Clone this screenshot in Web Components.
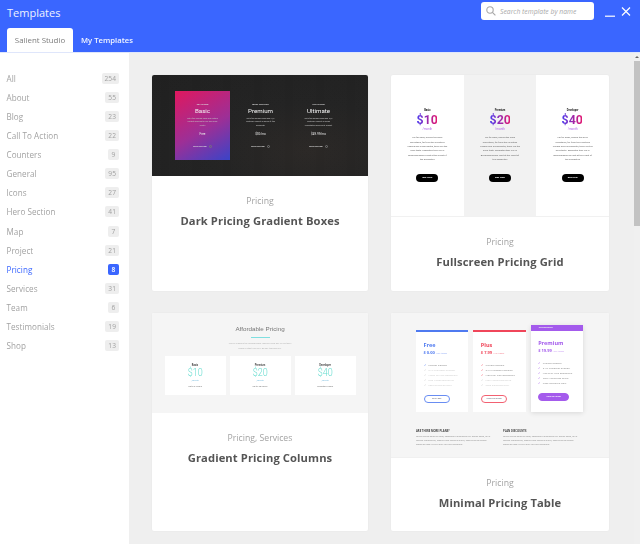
<!DOCTYPE html>
<html lang="en"><head><meta charset="utf-8"><title>Templates</title>
<style>
html,body{margin:0;height:544px;overflow:hidden;font-family:"Open Sans","Noto Sans",sans-serif;background:#efefef}
</style></head><body>
<x-app></x-app>
<script>
function def(name,css,html){
  customElements.define(name,class extends HTMLElement{
    constructor(){super();const r=this.attachShadow({mode:'open'});
      const h=typeof html==='function'?html(this):html;
      r.innerHTML='<style>'+css+'</style>'+h;}
  });
}
const A=(e,n,d='')=>e.getAttribute(n)??d;

def('x-cat',`:host{display:flex;align-items:center;justify-content:space-between;height:19.14px;font:8.1px "Open Sans",sans-serif;color:#a2a2a2;letter-spacing:.05px}
b{font-weight:400;font-size:6.6px;background:#eeeeee;color:#a0a0a0;border-radius:2px;height:11px;min-width:11px;padding:0 3px;box-sizing:border-box;display:flex;align-items:center;justify-content:center}
:host([active]){color:#3a66ff}:host([active]) b{background:#3a66ff;color:#fff;font-weight:600}`,
e=>`<slot></slot><b>${A(e,'n')}</b>`);

def('x-sidebar',`:host{display:block;width:129px;flex:none;background:#fff;box-sizing:border-box;padding:15.5px 10px 0 6.5px}`,
`<x-cat n="254">All</x-cat><x-cat n="55">About</x-cat><x-cat n="23">Blog</x-cat><x-cat n="22">Call To Action</x-cat><x-cat n="9">Counters</x-cat><x-cat n="95">General</x-cat><x-cat n="27">Icons</x-cat><x-cat n="41">Hero Section</x-cat><x-cat n="7">Map</x-cat><x-cat n="21">Project</x-cat><x-cat n="8" active>Pricing</x-cat><x-cat n="31">Services</x-cat><x-cat n="6">Team</x-cat><x-cat n="19">Testimonials</x-cat><x-cat n="13">Shop</x-cat>`);

def('x-search',`:host{display:flex;align-items:center;gap:4px;width:113px;height:18px;box-sizing:border-box;padding:0 5px;background:#fff;border-radius:3px;font:italic 6.8px "Open Sans",sans-serif;color:#a9a9a9;white-space:nowrap}
svg{flex:none}`,
`<svg width="10" height="10" viewBox="0 0 10 10" fill="none" stroke="#a8a8a8" stroke-width="1.1"><circle cx="4" cy="4" r="3.2"/><path d="M6.4 6.4 9.4 9.4"/></svg><span>Search template by name</span>`);

def('x-header',`:host{display:block;height:53px;background:#3a66ff;color:#fff;box-sizing:border-box;padding:2px 0 0 7px;border-bottom:1px solid #dfe6fb;flex:none;font-family:"Open Sans",sans-serif}
.top{display:flex;align-items:flex-start;height:26px}
h1{margin:0;font-weight:400;font-size:11px;line-height:22px;flex:1;color:#eef2ff}
x-search{margin-right:11px}
.ctl{display:flex;gap:6px;align-items:center;height:19px;margin-right:9px}
.tabs{display:flex;height:24px;gap:8px}
.tab{font-size:7.7px;display:flex;align-items:center;justify-content:center;border-radius:3px 3px 0 0;font-weight:600;color:#f2f5ff}
.tab.on{background:#fff;color:#7d7d7d;font-weight:400;width:66px;font-size:7.9px}`,
`<div class="top"><h1>Templates</h1><x-search></x-search><div class="ctl"><svg width="10" height="10" viewBox="0 0 10 10"><path d="M0 9.2H10" stroke="#fff" stroke-width="1.2"/></svg><svg width="10" height="10" viewBox="0 0 10 10"><path d="M1 .5 9 8.5M9 .5 1 8.5" stroke="#fff" stroke-width="1.2"/></svg></div></div>
<div class="tabs"><div class="tab on">Salient Studio</div><div class="tab">My Templates</div></div>`);

def('x-card',`:host{display:flex;flex-direction:column;background:#fff;border-radius:2px;overflow:hidden;font-family:"Open Sans",sans-serif;box-shadow:0 0 2px rgba(0,0,0,.05)}
.t{padding-top:19px;text-align:center}
.c{font-size:8.7px;color:#a3a3a3;line-height:13px}
.h{font-size:11.2px;font-weight:700;color:#555;line-height:16px;margin-top:5.4px;letter-spacing:.1px}`,
e=>`<slot></slot><div class="t"><div class="c">${A(e,'cat')}</div><div class="h">${A(e,'title')}</div></div>`);

/* dark gradient boxes */
def('x-dark-plan',`:host{display:flex;flex-direction:column;align-items:center;width:55px;height:69px;box-sizing:border-box;padding-top:12px;color:#e8e8e8;text-align:center;font-family:Roboto,sans-serif}
:host([hl]){background:linear-gradient(150deg,#e0185e 0%,#9d2f96 55%,#3a44c8 100%)}
.k{font-size:2.2px;font-weight:700;line-height:3px;color:#ddd}.n{font-size:6.2px;line-height:8px;margin-top:1px;color:#f4f4f4}
.d{font-size:1.9px;line-height:3.8px;margin-top:1.5px;color:#c4c4c4;height:13px;white-space:nowrap}.p{font-size:3px;line-height:5px;margin-top:2px}
.b{display:flex;align-items:center;gap:2px;font-size:1.8px;font-weight:700;margin-top:8px;color:#ddd}.b i{width:3.4px;height:3.4px;border:.5px solid #777;border-radius:50%;box-sizing:border-box}`,
e=>`<div class="k">${A(e,'k')}</div><div class="n">${A(e,'n')}</div><div class="d">${A(e,'d')}</div><div class="p">${A(e,'p')}</div><div class="b">PURCHASE NOW<i></i></div>`);
def('x-thumb-dark',`:host{display:flex;height:101px;box-sizing:border-box;padding:16px 0 0 23px;gap:3px;flex:none;background:repeating-linear-gradient(90deg,rgba(255,255,255,.003) 0 9px,rgba(0,0,0,.012) 9px 17px,rgba(255,255,255,.002) 17px 31px),radial-gradient(ellipse at 72% 75%,#2b2826 0,#232323 45%,#202020 100%)}`,
`<x-dark-plan hl k="TRY IT NOW" n="Basic" d="Get a free domain name and custom<br>content delivered to your door every<br>month" p="Free"></x-dark-plan>
<x-dark-plan k="MOST POPULAR" n="Premium" d="Get a free domain name and 24/7<br>customer support in search of free<br>bandwidth" p="$30/mo"></x-dark-plan>
<x-dark-plan k="HIGH VALUE" n="Ultimate" d="Get a free domain name and 24/7<br>customer support in design<br>consultation and priority support" p="$49.99/mo"></x-dark-plan>`);

/* fullscreen grid */
def('x-grid-col',`:host{display:flex;flex-direction:column;align-items:center;flex:1;padding-top:34px;box-sizing:border-box;text-align:center;font-family:Roboto,sans-serif;color:#444}
:host([alt]){background:#f2f2f2}
.k{font-size:2.6px;line-height:3px;font-weight:700;color:#222}
.p{font-size:13px;line-height:13px;font-weight:700;margin-top:1.2px;background:linear-gradient(90deg,#4a3af0,#e5186f);-webkit-background-clip:text;background-clip:text;color:transparent;transform:scaleX(.95)}
.m{font-size:3px;line-height:4px;color:#b06ae8;margin-top:1.2px}
.d{font-size:2.35px;line-height:4.35px;margin-top:5px;color:#666;white-space:nowrap}
.b{width:22px;height:7.5px;border-radius:4px;background:#000;color:#fff;font-size:2.5px;font-weight:700;display:flex;align-items:center;justify-content:center;margin-top:11.7px}`,
e=>`<div class="k">${A(e,'k')}</div><div class="p">${A(e,'p')}</div><div class="m">/month</div><div class="d">Far far away, behind the word<br>mountains, far from the countries<br>Vokalia and Consonantia, there live the<br>blind texts. Separated they live in<br>Bookmarksgrove right at the coast of<br>the Semantics</div><div class="b">Buy Now</div>`);
def('x-thumb-grid',`:host{display:flex;height:142px;flex:none;border-bottom:1px solid #f1f1f1;box-sizing:border-box}`,
`<x-grid-col k="Basic" p="$10"></x-grid-col><x-grid-col alt k="Premium" p="$20"></x-grid-col><x-grid-col k="Developer" p="$40"></x-grid-col>`);

/* gradient columns */
def('x-col-plan',`:host{display:flex;flex-direction:column;align-items:center;flex:1;height:39px;background:#fff;padding-top:8px;box-sizing:border-box;font-family:Roboto,sans-serif;text-align:center}
.k{font-size:2.6px;line-height:3px;color:#333;font-weight:500}
.p{font-size:10px;line-height:10px;font-weight:300;color:#66dccf;margin-top:1px;transform:scaleX(.9)}
.m{font-size:2.2px;line-height:5px;color:#7bd}
.d{font-size:2.3px;line-height:3px;color:#777;margin-top:2px}`,
e=>`<div class="k">${A(e,'k')}</div><div class="p">${A(e,'p')}</div><div class="m">/month</div><div class="d">${A(e,'d')}</div>`);
def('x-thumb-cols',`:host{display:flex;flex-direction:column;align-items:center;height:100px;flex:none;background:#f5f5f5;box-sizing:border-box;padding-top:11px;font-family:"Liberation Sans",sans-serif}
h3{margin:0;font-weight:400;font-size:6.25px;line-height:10px;color:#777}
i{display:block;width:19px;height:1px;background:#7fdfe0;margin-top:3px}
p{margin:3px 0 0;font-size:2.25px;line-height:4.6px;color:#aaa;text-align:center;white-space:nowrap}
.r{display:flex;gap:4px;width:191px;margin-top:6px}`,
`<h3>Affordable Pricing</h3><i></i><p>You've reached the pricing plans. Choose from any of our three<br>plans or start your free 30 day trial risk free</p>
<div class="r"><x-col-plan k="Basic" p="$10" d="Up to 5 Users"></x-col-plan><x-col-plan k="Premium" p="$20" d="Up to 20 Users"></x-col-plan><x-col-plan k="Developer" p="$40" d="Unlimited Users"></x-col-plan></div>`);

/* minimal table */
def('x-min-plan',`:host{--c:#4f7af0;display:flex;flex-direction:column;flex:1;height:82px;background:#fff;border-top:2px solid var(--c);box-sizing:border-box;padding:8.5px 7.5px 0;font-family:"Open Sans",sans-serif}
:host([tall]){height:87px;border-top:0;padding-top:0;margin-top:-5px;box-shadow:0 1px 5px rgba(0,0,0,.12)}
.top{display:block;margin:0 -7.5px 7.5px;height:6px;background:var(--c);color:#eee;font-size:1.8px;font-weight:700;line-height:6px;padding-left:8px}
.n{font-size:5.5px;font-weight:700;line-height:8px;color:var(--c)}
.p{font-size:4px;font-weight:700;line-height:6px;color:var(--c);white-space:nowrap;margin-top:1px}.p span{font-weight:400;font-size:2px;opacity:.7}
ul{list-style:none;margin:6px 0 0;padding:0;font-size:2.5px;line-height:5.2px;color:#888;white-space:nowrap}
li::before{content:"✓ ";color:var(--c);margin-right:1px}li.o{color:#ccc}li.o::before{color:#ccc}
.b{margin-top:6px;width:26.5px;height:8px;border-radius:4px;border:.7px solid var(--c);box-sizing:border-box;display:flex;align-items:center;justify-content:center;font-size:2.1px;font-weight:700;color:#667;opacity:.85}
:host([tall]) .b{width:31px;background:var(--c);color:#fff;opacity:1}`,
e=>{const k=+A(e,'on');const li=['Custom Domain','24/7 Customer Support','World-Of-Fine Bandwidth','Free WordPress Setup','Cake Delivered Daily'].map((t,i)=>`<li class="${i<k?'':'o'}">${t}</li>`).join('');
return `${e.hasAttribute('tall')?'<div class="top">RECOMMENDED</div>':''}<div class="n">${A(e,'n')}</div><div class="p">${A(e,'p')} <span>/ Per Month</span></div><ul>${li}</ul><div class="b">${A(e,'b')}</div>`});
def('x-faq',`:host{display:block;flex:1;font-family:"Open Sans",sans-serif}
b{display:block;font-size:2.7px;line-height:4px;color:#444}
p{margin:2px 0 0;font-size:2.15px;line-height:4.2px;color:#888;white-space:nowrap}`,
e=>`<b>${A(e,'q')}</b><p>Lorem ipsum dolor sit amet, consectetur adipiscing elit. Donec porta, mi ut<br>facilisis ullamcorper, magna risus vehicula augue, eget faucibus magna<br>massa at justo. Nulla a arcu ut turpis hendrerit.</p>`);
def('x-thumb-min',`:host{display:flex;flex-direction:column;height:145px;flex:none;background:#f5f5f5;box-sizing:border-box;padding:17px 26px 0 25px;border-bottom:1px solid #f0f0f0}
.r{display:flex;gap:5px}.f{display:flex;gap:7px;margin-top:16.5px}`,
`<div class="r"><x-min-plan n="Free" p="$ 0.00" on="1" b="GET FREE"></x-min-plan><x-min-plan style="--c:#f0465a" n="Plus" p="$ 7.99" on="3" b="SIGN UP NOW!"></x-min-plan><x-min-plan tall style="--c:#a45bec" n="Premium" p="$ 19.99" on="5" b="SIGN UP NOW"></x-min-plan></div>
<div class="f"><x-faq q="ARE THERE MORE PLANS?"></x-faq><x-faq q="PLAN DISCOUNTS"></x-faq></div>`);

def('x-scrollbar',`:host{display:flex;flex-direction:column;width:6px;flex:none;background:#f0f0f0}
.a{height:8px;display:flex;align-items:center;justify-content:center}.a::before{content:"";border:2px solid transparent;border-top:0;border-bottom:2.5px solid #666}
.t{height:165px;background:#c2c2c2}`,`<div class="a"></div><div class="t"></div>`);

def('x-app',`:host{display:flex;flex-direction:column;height:544px;overflow:hidden;filter:blur(.35px)}
.b{display:flex;flex:1;min-height:0}
main{flex:1;min-width:0;display:grid;grid-template-columns:216px 218px;grid-auto-rows:216px;column-gap:23px;row-gap:22px;padding:22px 0 0 23px;box-sizing:border-box;align-content:start}`,
`<x-header></x-header><div class="b"><x-sidebar></x-sidebar><main>
<x-card cat="Pricing" title="Dark Pricing Gradient Boxes"><x-thumb-dark></x-thumb-dark></x-card>
<x-card cat="Pricing" title="Fullscreen Pricing Grid"><x-thumb-grid></x-thumb-grid></x-card>
<x-card cat="Pricing, Services" title="Gradient Pricing Columns" style="height:218px"><x-thumb-cols></x-thumb-cols></x-card>
<x-card cat="Pricing" title="Minimal Pricing Table" style="height:218px"><x-thumb-min></x-thumb-min></x-card>
</main><x-scrollbar></x-scrollbar></div>`);
</script>
</body></html>
